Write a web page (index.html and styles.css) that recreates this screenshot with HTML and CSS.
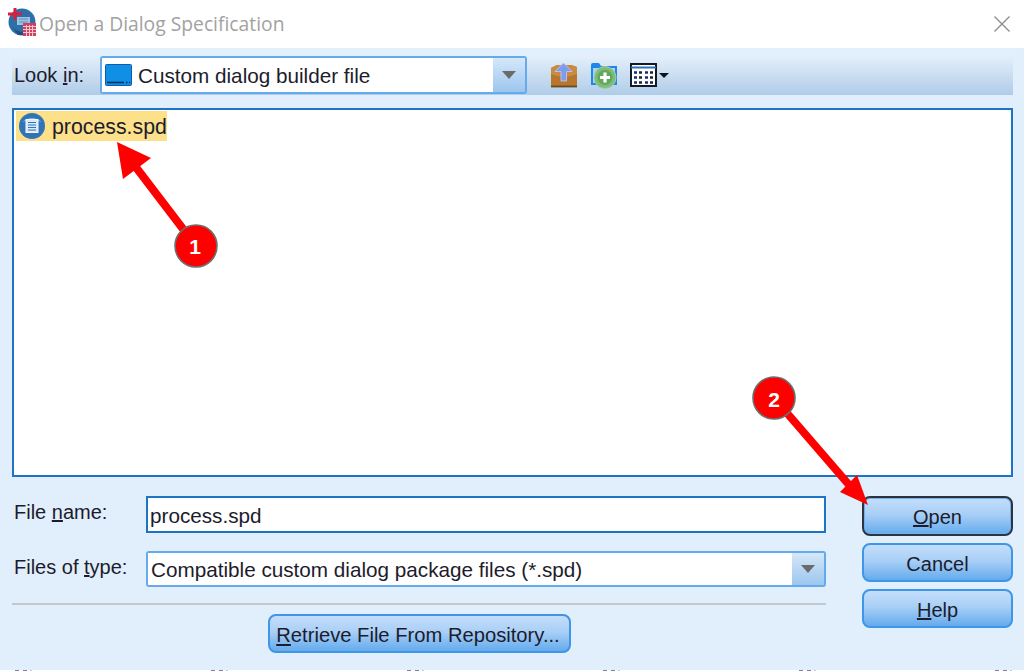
FILE: index.html
```html
<!DOCTYPE html>
<html lang="en">
<head>
    <meta charset="UTF-8">
    <title>Open a Dialog Specification</title>
    <link rel="stylesheet" href="styles.css">
</head>
<body>
    <div class="titlebar">
        <svg class="app-icon" width="28" height="28" viewBox="0 0 28 28">
            <circle cx="14" cy="14" r="13.5" fill="#2f6fa8"/>
            <path d="M5 20 Q14 27 22 21 L22 27 L10 27 Z" fill="#1d4f80"/>
            <rect x="9" y="9" width="13" height="8" fill="#9cc3e4"/>
            <path d="M11 11h9M11 14h9" stroke="#5d8fbd" stroke-width="1"/>
            <rect x="0" y="4.5" width="14" height="3" fill="#d8203c"/>
            <rect x="5.5" y="0" width="3" height="12" fill="#d8203c"/>
            <rect x="15" y="15" width="13" height="13" fill="#d2405e"/>
            <path d="M15 18.5h13M15 21.5h13M15 24.5h13M18.5 17v11M21.5 17v11M24.5 17v11" stroke="#f4c6d0" stroke-width="1"/>
        </svg>
        <span class="title-text">Open a Dialog Specification</span>
        <svg class="close-x" width="18" height="18" viewBox="0 0 18 18">
            <path d="M1.5 1.5L16.5 16.5M16.5 1.5L1.5 16.5" stroke="#8d8d8d" stroke-width="1.4" fill="none"/>
        </svg>
    </div>

    <div class="dialog">
        <div class="toolbar">
            <span class="lookin-label">Look <u>i</u>n:</span>
            <div class="combo lookin-combo">
                <div class="combo-value">
                    <svg class="drive-icon" width="27" height="22" viewBox="0 0 27 22">
                        <rect x="0.5" y="0.5" width="26" height="21" rx="1" fill="#0f8fe6" stroke="#0a5fa8"/>
                        <path d="M2 18.5h17M21 18.5h1.5M24 18.5h1" stroke="#06304f" stroke-width="1.4"/>
                    </svg>
                    Custom dialog builder file
                </div>
                <div class="combo-arrow"><i></i></div>
            </div>
            <div class="tools">
                <svg width="28" height="25" viewBox="0 0 28 25">
                    <path d="M1 5L7 2H21L27 4V24H1Z" fill="#b8752c"/>
                    <path d="M1 5L7 2H21L27 4V11Q14 17 1 11Z" fill="#c98a42"/>
                    <path d="M1 23.5H27" stroke="#6a4a24" stroke-width="1.8"/>
                    <path d="M13.5 0L22 8.5H16.5V18H11V8.5H5Z" fill="#7f9bf0" stroke="#c0cef6" stroke-width="0.8"/>
                </svg>
                <svg width="28" height="27" viewBox="0 0 28 27">
                    <path d="M1 3Q1 1 3 1H9L11 4H27V23H1Z" fill="#1f86ea"/>
                    <rect x="3" y="6" width="22" height="15" fill="#a9d2f6"/>
                    <circle cx="15" cy="15.5" r="11" fill="#7fbb7a" stroke="#a5cfa2" stroke-width="1"/>
                    <circle cx="15" cy="15.5" r="7.5" fill="#5fa85c"/>
                    <path d="M15 10.5v10M10 15.5h10" stroke="#fff" stroke-width="3.2"/>
                </svg>
                <div class="view-tool">
                    <svg width="27" height="24" viewBox="0 0 27 24">
                        <rect x="1" y="1" width="25" height="22" fill="#fff" stroke="#141a24" stroke-width="2"/>
                        <rect x="1" y="3.5" width="25" height="2" fill="#2a70c0"/>
                        <path d="M4 9.5h3M15 9.5h3M4 14.5h3M15 14.5h3M4 19.5h3M15 19.5h3" stroke="#1a2a80" stroke-width="2.6"/>
                        <path d="M9 9.5h3M20 9.5h3M9 14.5h3M20 14.5h3M9 19.5h3M20 19.5h3" stroke="#20242c" stroke-width="2.6"/>
                    </svg>
                    <i></i>
                </div>
            </div>
        </div>

        <div class="file-list">
            <div class="file-row">
                <svg width="28" height="28" viewBox="0 0 28 28">
                    <circle cx="14" cy="14" r="13" fill="#2f73b8"/>
                    <path d="M4 10Q14 2 24 10Q14 6 4 10Z" fill="#86b4e2"/>
                    <rect x="8" y="7.5" width="12" height="13" fill="#dbe9f8" stroke="#f4f8fd" stroke-width="1"/>
                    <path d="M10 10.5h8M10 13h8M10 15.5h8M10 18h8" stroke="#2f73b8" stroke-width="1.2"/>
                </svg>
                <span class="file-name">process.spd</span>
            </div>
        </div>

        <div class="bottom">
            <div class="fields">
                <div class="field">
                    <span class="field-label">File <u>n</u>ame:</span>
                    <div class="text-input">process.spd</div>
                </div>
                <div class="field type-field">
                    <span class="field-label">Files of <u>t</u>ype:</span>
                    <div class="combo type-combo">
                        <div class="combo-value">Compatible custom dialog package files (*.spd)</div>
                        <div class="combo-arrow"><i></i></div>
                    </div>
                </div>
                <div class="separator"></div>
                <div class="retrieve-row">
                    <div class="btn retrieve"><span><u>R</u>etrieve File From Repository...</span></div>
                </div>
            </div>
            <div class="actions">
                <div class="btn btn-open"><span><u>O</u>pen</span></div>
                <div class="btn">Cancel</div>
                <div class="btn"><span><u>H</u>elp</span></div>
            </div>
        </div>
    </div>

    <div class="tear">
        <i></i><i></i><i></i><i></i><i></i><i></i>
    </div>

    <!-- callouts drawn over the dialog -->
    <svg class="callouts" width="1024" height="671" viewBox="0 0 1024 671">
        <path d="M196 246L135 166" stroke="#f00" stroke-width="8" fill="none"/>
        <path d="M117 142L151 158L123 179Z" fill="#f00"/>
        <circle cx="196" cy="246" r="21" fill="#f00" stroke="#6e6e6e" stroke-width="1.6"/>
        <text x="195" y="254" class="callout-num">1</text>

        <path d="M774 398L850 486" stroke="#f00" stroke-width="8" fill="none"/>
        <path d="M868 505L840 492L857 475Z" fill="#f00"/>
        <circle cx="774" cy="398" r="21" fill="#f00" stroke="#6e6e6e" stroke-width="1.6"/>
        <text x="774" y="407" class="callout-num">2</text>
    </svg>
</body>
</html>
```

FILE: styles.css
```css
html, body {
    margin: 0;
    padding: 0;
}
body {
    width: 1024px;
    height: 671px;
    overflow: hidden;
    background: #fff;
    font-family: "Liberation Sans", Arial, sans-serif;
    font-size: 20px;
    color: #1c1c2c;
    position: relative;
}
.titlebar {
    height: 48px;
    display: flex;
    align-items: center;
    padding: 0 12px 0 8px;
    box-sizing: border-box;
    background: #fff;
}
.app-icon {
    margin: 0 3px 4px 0;
}
.title-text {
    font-family: "Open Sans", "Noto Sans", sans-serif;
    font-size: 19.3px;
    color: #a2a2a2;
    padding-bottom: 1px;
}
.close-x {
    margin-left: auto;
    margin-right: 1px;
}
.dialog {
    height: 622px;
    box-sizing: border-box;
    background: #e1eefb;
    padding: 7px 11px 0 12px;
}
.toolbar {
    height: 40px;
    display: flex;
    align-items: center;
    background: linear-gradient(180deg, #e6f0fb 0%, #afcce8 100%);
}
.lookin-label {
    width: 88px;
    padding-left: 2px;
    box-sizing: border-box;
}
.combo {
    display: flex;
    box-sizing: border-box;
    border: 2px solid #66aaee;
    border-radius: 3px;
    background: #fff;
}
.combo-value {
    flex: 1;
    display: flex;
    align-items: center;
    background: #fff;
    font-size: 20.7px;
    white-space: nowrap;
    padding-top: 2px;
    box-sizing: border-box;
}
.combo-arrow {
    width: 32px;
    display: flex;
    align-items: center;
    justify-content: center;
    background: linear-gradient(180deg, #d6e7f9 0%, #9cc6ee 100%);
}
.combo-arrow i {
    width: 0;
    height: 0;
    border-left: 7px solid transparent;
    border-right: 7px solid transparent;
    border-top: 8px solid #6a6a6a;
}
.lookin-combo {
    width: 427px;
    height: 38px;
}
.drive-icon {
    margin: 0 6px 2px 3px;
}
.tools {
    display: flex;
    align-items: center;
    gap: 12px;
    margin-left: 23px;
}
.view-tool {
    display: flex;
    align-items: center;
    gap: 2px;
}
.view-tool i {
    width: 0;
    height: 0;
    border-left: 5px solid transparent;
    border-right: 5px solid transparent;
    border-top: 5px solid #10141c;
}
.file-list {
    height: 369px;
    margin-top: 13px;
    box-sizing: border-box;
    border: 2px solid #1c74c4;
    background: #fff;
    padding: 1px 2px;
}
.file-row {
    width: 151px;
    height: 30px;
    display: flex;
    align-items: center;
    gap: 6px;
    box-sizing: border-box;
    padding-left: 2px;
    background: #fde08a;
    font-size: 21.3px;
}
.file-name {
    padding-top: 2px;
}
.bottom {
    display: flex;
    justify-content: space-between;
    margin-top: 19px;
}
.fields {
    width: 814px;
}
.field {
    display: flex;
    align-items: center;
}
.field-label {
    width: 134px;
    padding: 0 0 4px 2px;
    box-sizing: border-box;
}
.text-input {
    width: 680px;
    height: 37px;
    display: flex;
    align-items: center;
    box-sizing: border-box;
    border: 2px solid #1c74c4;
    background: #fff;
    padding: 2px 0 0 2px;
    font-size: 20.7px;
}
.type-field {
    margin-top: 18px;
}
.type-combo {
    width: 680px;
    height: 36px;
}
.type-combo .combo-value {
    padding-left: 3px;
}
.separator {
    height: 2px;
    margin-top: 16px;
    background: #c4c8cc;
}
.retrieve-row {
    display: flex;
    justify-content: center;
    margin-top: 9px;
}
.btn {
    display: flex;
    align-items: center;
    justify-content: center;
    box-sizing: border-box;
    height: 39px;
    padding-top: 3px;
    border: 2px solid #3f95e6;
    border-radius: 8px;
    background: linear-gradient(180deg, #c4defb 0%, #a9cff6 45%, #64abed 100%);
}
.retrieve {
    width: 303px;
    font-size: 20.2px;
    padding-right: 2px;
}
.actions {
    width: 151px;
    display: flex;
    flex-direction: column;
    gap: 7px;
}
.btn-open {
    height: 40px;
    border-color: #2b3440;
    box-shadow: inset 0 0 0 1px #6fb0ee;
}
.tear {
    height: 1px;
    display: flex;
    padding-left: 15px;
    gap: 179px;
    background: #fff;
}
.tear i {
    width: 17px;
    height: 1px;
    background: linear-gradient(90deg, #8a7aa0 0 25%, #fff 25% 48%, #8a7aa0 48% 72%, #fff 72% 88%, #c4c8dc 88%);
}
.callouts {
    position: absolute;
    left: 0;
    top: 0;
}
.callout-num {
    font-family: "Liberation Sans", Arial, sans-serif;
    font-size: 21px;
    font-weight: bold;
    fill: #fff;
    text-anchor: middle;
}
```
